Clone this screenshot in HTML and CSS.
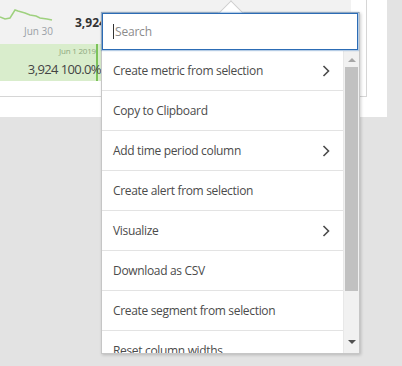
FILE: index.html
```html
<!DOCTYPE html>
<html lang="en">
<head>
  <meta charset="UTF-8" />
  <title>Freeform table menu</title>
  <link rel="stylesheet" href="styles.css">
</head>
<body>

<div class="card">
  <div class="table">
    <div class="row row-top">
      <div class="cell trend">
        <svg class="spark" width="56" height="24" viewBox="0 0 56 24">
          <polyline points="0,17 5,19 10,18 15,10 18,11 25,13 30,15 36,16 40,18 47,19 52,20" fill="none" stroke="#9fd17f" stroke-width="1.5"/>
        </svg>
        <span class="axis">Jun 30</span>
      </div>
      <div class="cell value">3,924</div>
    </div>
    <div class="row row-total">
      <div class="cell total">
        <span class="date">Jun 1 2019</span>
        <span class="figures">3,924 100.0%</span>
      </div>
    </div>
    <div class="row row-empty"></div>
  </div>
</div>

<div class="popup">
  <div class="search">
    <span class="caret"></span>
    <span class="placeholder">Search</span>
  </div>
  <div class="menu">
    <ul class="items">
      <li>Create metric from selection <svg class="chev" width="8" height="12" viewBox="0 0 8 12"><polyline points="1.5,1 6.5,6 1.5,11" fill="none" stroke="#4b4b4b" stroke-width="1.6"/></svg></li>
      <li>Copy to Clipboard</li>
      <li>Add time period column <svg class="chev" width="8" height="12" viewBox="0 0 8 12"><polyline points="1.5,1 6.5,6 1.5,11" fill="none" stroke="#4b4b4b" stroke-width="1.6"/></svg></li>
      <li>Create alert from selection</li>
      <li>Visualize <svg class="chev" width="8" height="12" viewBox="0 0 8 12"><polyline points="1.5,1 6.5,6 1.5,11" fill="none" stroke="#4b4b4b" stroke-width="1.6"/></svg></li>
      <li>Download as CSV</li>
      <li>Create segment from selection</li>
      <li>Reset column widths</li>
    </ul>
    <div class="scrollbar">
      <span class="arrow up"></span>
      <span class="thumb"></span>
      <span class="arrow down"></span>
    </div>
  </div>
</div>

</body>
</html>
```

FILE: styles.css
```css
:root {
  --text: #4b4b4b;
  --line: #e3e3e3;
  --page: #e3e3e3;
  --blue: #2c6cb5;
}

* {
  margin: 0;
  padding: 0;
  box-sizing: border-box;
}

html, body {
  width: 402px;
  height: 366px;
  overflow: hidden;
}

body {
  font-family: 'Open Sans', 'Noto Sans', sans-serif;
  background: var(--page);
  color: var(--text);
  position: relative;
}

/* table card behind the menu */
.card {
  width: 387px;
  height: 117px;
  background: #fff;
}

.table {
  width: 367px;
  height: 97px;
  border-right: 1px solid #d6d6d6;
  border-bottom: 1px solid #d6d6d6;
  display: flex;
  flex-direction: column;
}

.row {
  display: flex;
  width: 351px;
}

.row-top {
  height: 44px;
  background: #f2f2f2;
}

.trend {
  width: 56px;
  display: flex;
  flex-direction: column;
}

.spark {
  display: block;
}

.axis {
  font-size: 10px;
  color: #9aa0a6;
  padding-left: 24px;
  line-height: 10px;
  margin-top: 2px;
}

.value {
  padding-left: 19px;
  padding-top: 14px;
  font-size: 12px;
  font-weight: 700;
  color: #333;
}

.row-total {
  height: 37px;
  background: #d9edcc;
}

.total {
  width: 98px;
  border-right: 2px solid #7cc35a;
  display: flex;
  flex-direction: column;
  align-items: flex-end;
}

.date {
  font-size: 8px;
  line-height: 10px;
  color: #8ea87e;
  margin-top: 2px;
  letter-spacing: -0.2px;
}

.figures {
  font-size: 13px;
  color: #444;
  margin-top: 4px;
  margin-right: -5px;
  letter-spacing: -0.6px;
  white-space: nowrap;
}

.row-empty {
  flex: 1;
}

/* context menu */
.popup {
  position: absolute;
  left: 101px;
  top: 12px;
  width: 259px;
  height: 342px;
  background: #fff;
  border: 1px solid #c6c6c6;
  box-shadow: 1px 1px 3px rgba(0, 0, 0, 0.2);
}

.popup::before {
  content: "";
  position: absolute;
  left: 120px;
  top: -9px;
  width: 17px;
  height: 17px;
  background: #fff;
  border-left: 1px solid #cfcfcf;
  border-top: 1px solid #cfcfcf;
  transform: rotate(45deg);
}

.search {
  position: relative;
  height: 37px;
  margin-right: 1px;
  border: 1px solid var(--blue);
  box-shadow: 0 0 1px 1px rgba(44, 108, 181, 0.35);
  display: flex;
  align-items: center;
  padding-left: 10px;
  background: #fff;
}

.caret {
  width: 1px;
  height: 15px;
  background: #333;
  margin-right: 1px;
}

.placeholder {
  font-size: 12px;
  color: #8c8c8c;
  letter-spacing: -0.2px;
}

.menu {
  display: flex;
  height: 302px;
  margin-top: 1px;
}

.items {
  list-style: none;
  flex: 1;
  overflow: hidden;
}

.items li {
  height: 40px;
  border-bottom: 1px solid var(--line);
  display: flex;
  align-items: center;
  justify-content: space-between;
  padding: 0 13px 0 11px;
  font-size: 12px;
  letter-spacing: -0.33px;
  white-space: nowrap;
}

.scrollbar {
  width: 16px;
  background: #f1f1f1;
  border-left: 1px solid #e8e8e8;
  display: flex;
  flex-direction: column;
  align-items: center;
}

.arrow {
  width: 0;
  height: 0;
  border-left: 4px solid transparent;
  border-right: 4px solid transparent;
}

.arrow.up {
  border-bottom: 4px solid #a6a6a6;
  margin-top: 7px;
}

.thumb {
  width: 13px;
  height: 224px;
  background: #c1c1c1;
  margin-top: 5px;
}

.arrow.down {
  border-top: 4px solid #505050;
  margin-top: auto;
  margin-bottom: 9px;
}
```
